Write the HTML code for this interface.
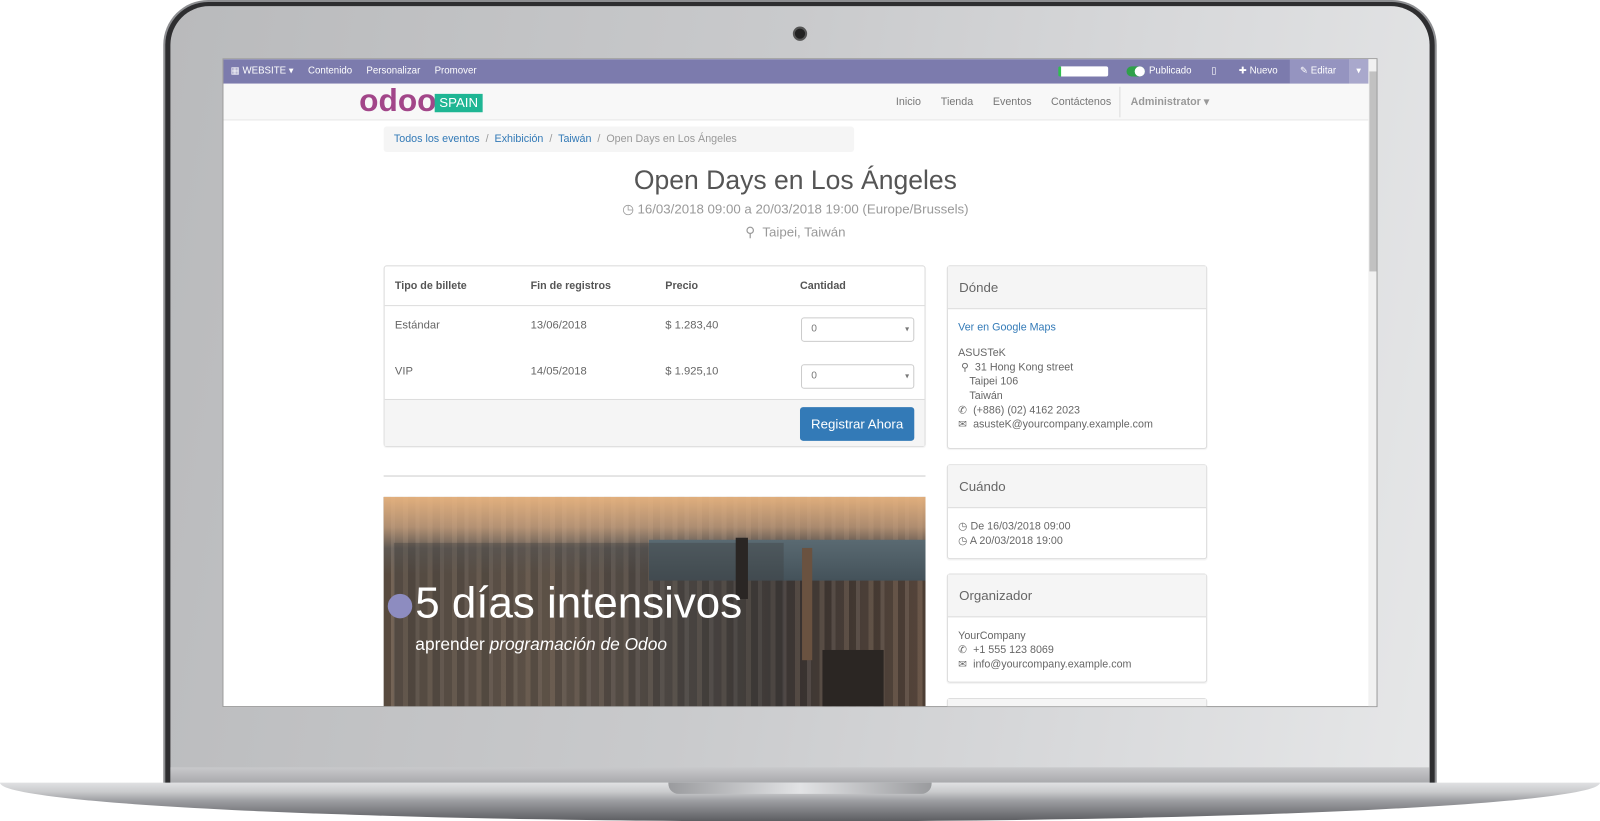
<!DOCTYPE html>
<html><head><meta charset="utf-8"><style>
*{margin:0;padding:0;box-sizing:border-box}
html,body{width:1600px;height:821px;overflow:hidden;background:#fff;font-family:"Liberation Sans",sans-serif}
#wrap{width:1568px;height:805px;position:relative;transform:scale(1.0204);transform-origin:0 0}
.lid{position:absolute;left:160px;top:0;width:1248px;height:775px;border-radius:44px 44px 0 0;background:#8e8f92}
.lid2{position:absolute;left:162px;top:2px;width:1244px;height:773px;border-radius:42px 42px 0 0;background:#2e2e30}
.bezel{position:absolute;left:167px;top:6px;width:1234px;height:769px;border-radius:38px 38px 0 0;background:linear-gradient(100deg,#b9babc 0%,#c9cacc 45%,#d9dadc 75%,#e6e7e8 100%)}
.bezb{position:absolute;left:167px;top:752px;width:1234px;height:15px;background:linear-gradient(#c8c9cb,#a9aaad)}
.cam{position:absolute;left:777px;top:26px;width:14px;height:14px;border-radius:50%;background:#222;border:2px solid #555}
.base{position:absolute;left:0;top:767px;width:1568px;height:38px;background:linear-gradient(#e0e1e3 0,#c9cacc 9px,#9c9da1 18px,#5b5c60 38px);border-radius:0 0 50% 50%/0 0 100% 100%}
.notch{position:absolute;left:655px;top:767px;width:258px;height:11px;background:linear-gradient(90deg,#9a9b9e,#e2e3e5 50%,#9a9b9e);border-radius:0 0 10px 10px}
.scr{position:absolute;left:218px;top:57px;width:1132px;height:636px;background:#fff;overflow:hidden;border:1px solid #999;font-size:11px;color:#666}
.abs{position:absolute}
.top{left:0;top:0;width:1122px;height:24px;background:#7c7bad;color:#fff;font-size:9.5px;line-height:24px}
.nav{left:0;top:24px;width:1122px;height:36px;background:#f8f8f8;border-bottom:1px solid #e7e7e7;font-size:10.5px;color:#777;line-height:36px}
.bc{left:157px;top:66px;width:461px;height:25px;background:#f5f5f5;border-radius:3px;font-size:10.5px;line-height:25px;padding-left:10px;color:#999}
.bc a{color:#337ab7}
.panel{border:1px solid #ddd;border-radius:3px;background:#fff;box-shadow:0 1px 1px rgba(0,0,0,.05)}
.ph{background:#f5f5f5;border-bottom:1px solid #ddd;font-size:13px;color:#666;padding-left:11px}
.sel{position:absolute;width:111px;height:24px;border:1px solid #ccc;border-radius:3px;font-size:10px;line-height:22px;padding-left:9px;color:#777}
.sel:after{content:"▾";position:absolute;right:4px;font-size:8px}
.sb{font-size:10.5px;color:#666;line-height:14px}
</style></head><body><div id="wrap">
<div class="lid"></div><div class="lid2"></div><div class="bezel"></div><div class="bezb"></div>
<div class="cam"></div>
<div class="base"></div><div class="notch"></div>
<div class="scr">
 <div class="abs top"><span style="margin-left:7px">▦ WEBSITE ▾</span><span style="margin-left:14px">Contenido</span><span style="margin-left:14px">Personalizar</span><span style="margin-left:14px">Promover</span>
  <div class="abs" style="left:818px;top:7px;width:49px;height:10px;background:#fff;border-radius:2px;border-left:3px solid #2fbf4f"></div>
  <div class="abs" style="left:885px;top:7px;width:18px;height:10px;background:#2fa14a;border-radius:5px"><div style="position:absolute;right:0;top:0;width:10px;height:10px;border-radius:50%;background:#fff"></div></div>
  <span class="abs" style="left:907px">Publicado</span>
  <span class="abs" style="left:968px">▯</span>
  <span class="abs" style="left:995px">✚ Nuevo</span>
  <div class="abs" style="left:1045px;top:0;width:58px;height:24px;background:#9594c0;padding-left:10px">✎ Editar</div>
  <div class="abs" style="left:1103px;top:0;width:19px;height:24px;background:#a9a8cc;text-align:center">▾</div>
 </div>
 <div class="abs" style="left:1122px;top:0;width:10px;height:636px;background:#f1f1f1"><div style="margin:12px 1px;height:196px;background:#c1c1c1"></div></div>
 <div class="abs nav">
  <span class="abs" style="left:133px;top:-1px;font-size:31px;color:#a24689;font-weight:bold;letter-spacing:0px;line-height:36px">odoo</span>
  <span class="abs" style="left:207px;top:10px;height:18px;width:47px;background:#1fb694;color:#fff;font-size:13px;line-height:18px;text-align:center">SPAIN</span>
  <span class="abs" style="left:659px">Inicio</span><span class="abs" style="left:703px">Tienda</span><span class="abs" style="left:754px">Eventos</span><span class="abs" style="left:811px">Contáctenos</span>
  <div class="abs" style="left:878px;top:3px;width:1px;height:30px;background:#ddd"></div>
  <span class="abs" style="left:889px;font-weight:bold;color:#999">Administrator ▾</span>
 </div>
 <div class="abs bc"><a>Todos los eventos</a> &nbsp;/&nbsp; <a>Exhibición</a> &nbsp;/&nbsp; <a>Taiwán</a> &nbsp;/&nbsp; Open Days en Los Ángeles</div>
 <div class="abs" style="left:157px;top:103px;width:807px;text-align:center;font-size:26px;color:#555">Open Days en Los Ángeles</div>
 <div class="abs" style="left:157px;top:139px;width:807px;text-align:center;font-size:13px;color:#999">◷ 16/03/2018 09:00 a 20/03/2018 19:00 (Europe/Brussels)</div>
 <div class="abs" style="left:157px;top:162px;width:807px;text-align:center;font-size:13px;color:#999">⚲ &nbsp;Taipei, Taiwán</div>
 <div class="abs panel" style="left:157px;top:202px;width:531px;height:178px">
  <div style="height:39px;border-bottom:1px solid #ddd;font-weight:bold;font-size:10.5px;line-height:38px;position:relative;color:#555">
   <span class="abs" style="left:10px">Tipo de billete</span><span class="abs" style="left:143px">Fin de registros</span><span class="abs" style="left:275px">Precio</span><span class="abs" style="left:407px">Cantidad</span></div>
  <span class="abs" style="left:10px;top:52px">Estándar</span><span class="abs" style="left:143px;top:52px">13/06/2018</span><span class="abs" style="left:275px;top:52px">$ 1.283,40</span>
  <div class="sel" style="left:408px;top:50px">0</div>
  <span class="abs" style="left:10px;top:97px">VIP</span><span class="abs" style="left:143px;top:97px">14/05/2018</span><span class="abs" style="left:275px;top:97px">$ 1.925,10</span>
  <div class="sel" style="left:408px;top:96px">0</div>
  <div class="abs" style="left:0;top:130px;width:529px;height:46px;background:#f5f5f5;border-top:1px solid #ddd"><div class="abs" style="left:407px;top:7px;width:112px;height:33px;background:#337ab7;border-radius:3px;color:#fff;font-size:13px;line-height:33px;text-align:center">Registrar Ahora</div></div>
 </div>
 <div class="abs" style="left:157px;top:408px;width:531px;height:1px;background:#ccc"></div>
 <div class="abs" style="left:157px;top:429px;width:531px;height:210px;overflow:hidden;background:
  linear-gradient(180deg,rgba(232,180,128,.95) 0%,rgba(205,165,130,.75) 14%,rgba(110,115,120,.35) 24%,rgba(0,0,0,0) 36%),
  repeating-linear-gradient(90deg,rgba(0,0,0,.18) 0 7px,rgba(255,255,255,.06) 7px 11px,rgba(0,0,0,.1) 11px 19px,rgba(255,220,180,.08) 19px 24px),
  linear-gradient(90deg,#6a5a4c 0%,#7a6655 30%,#5a524c 55%,#433c39 75%,#5e4c40 100%)">
  <div class="abs" style="left:260px;top:42px;width:271px;height:40px;background:linear-gradient(#5a6a72,#44525a)"></div>
  <div class="abs" style="left:10px;top:45px;width:382px;height:165px;background:rgba(60,60,60,.35)"></div>
  <div class="abs" style="left:345px;top:40px;width:12px;height:60px;background:#2a2624"></div>
  <div class="abs" style="left:410px;top:50px;width:10px;height:110px;background:#6a5240"></div>
  <div class="abs" style="left:430px;top:150px;width:60px;height:60px;background:#2b2623"></div>
  <div class="abs" style="left:4px;top:95px;width:24px;height:24px;border-radius:50%;background:#8d8cc0"></div>
  <div class="abs" style="left:31px;top:80px;font-size:43px;color:#fff;white-space:nowrap">5 días intensivos</div>
  <div class="abs" style="left:31px;top:135px;font-size:17px;color:#fff;white-space:nowrap">aprender <i>programación de Odoo</i></div>
 </div>
 <div class="abs panel" style="left:709px;top:202px;width:255px;height:180px">
  <div class="ph" style="height:42px;line-height:42px">Dónde</div>
  <div class="sb" style="padding:11px 10px">
   <div style="color:#337ab7">Ver en Google Maps</div>
   <div style="margin-top:11px">ASUSTeK</div><div>&nbsp;⚲ &nbsp;31 Hong Kong street</div><div style="padding-left:11px">Taipei 106</div><div style="padding-left:11px">Taiwán</div><div>✆ &nbsp;(+886) (02) 4162 2023</div><div>✉ &nbsp;asusteK@yourcompany.example.com</div>
  </div>
 </div>
 <div class="abs panel" style="left:709px;top:397px;width:255px;height:93px">
  <div class="ph" style="height:42px;line-height:42px">Cuándo</div>
  <div class="sb" style="padding:11px 10px"><div>◷ De 16/03/2018 09:00</div><div>◷ A 20/03/2018 19:00</div></div>
 </div>
 <div class="abs panel" style="left:709px;top:504px;width:255px;height:107px">
  <div class="ph" style="height:42px;line-height:42px">Organizador</div>
  <div class="sb" style="padding:11px 10px"><div>YourCompany</div><div>✆ &nbsp;+1 555 123 8069</div><div>✉ &nbsp;info@yourcompany.example.com</div></div>
 </div>
 <div class="abs panel" style="left:709px;top:626px;width:255px;height:40px"><div class="ph" style="height:40px"></div></div>
</div>
</div></body></html>
